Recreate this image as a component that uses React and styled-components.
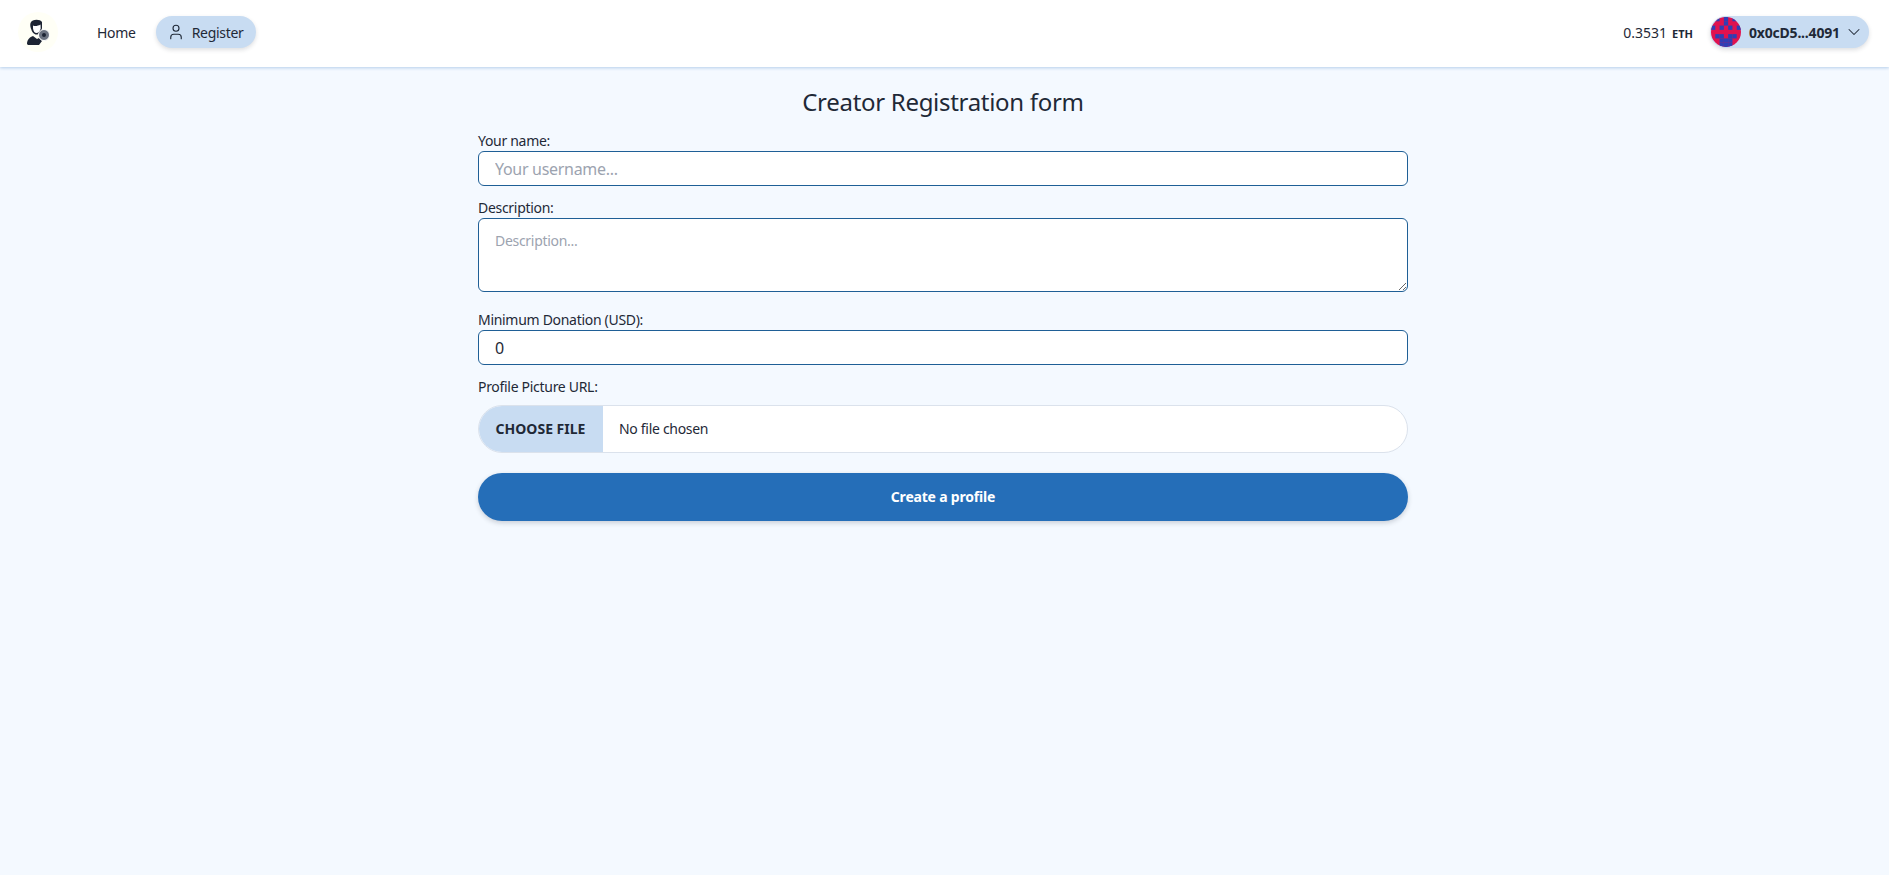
import React from "react";
import styled, { createGlobalStyle } from "styled-components";
import { User, ChevronDown } from "lucide-react";

const Global = createGlobalStyle`
  * { box-sizing: border-box; }
  html, body { margin: 0; padding: 0; }
  body { background: #f4f9ff; font-family: "Noto Sans", sans-serif; color: #1f2937; min-height: 875px; letter-spacing: -0.3px; }
`;
const Bar = styled.header`
  height: 67px; background: #fff; display: flex; align-items: center; justify-content: space-between;
  padding: 0 20px 3px 18px; box-shadow: 0 1px 3px rgba(37,110,184,.3);
`;
const Side = styled.div`display: flex; align-items: center;`;
const LogoBox = styled.div`
  width: 40px; height: 40px; border-radius: 50%; background: #fffff6; display: flex; align-items: center; justify-content: center; margin-right: 39px;
`;
const NavLink = styled.a`
  height: 32px; display: flex; align-items: center; gap: 7px; font-size: 14px; color: #1f2937; border-radius: 16px;
  padding: ${p => (p.$active ? "0 12px 0 11px" : "0 20px 0 0")};
  background: ${p => (p.$active ? "#c8dcf2" : "transparent")};
  box-shadow: ${p => (p.$active ? "0 2px 4px rgba(31,41,55,.15)" : "none")};
`;
const Balance = styled.div`font-size: 14px; letter-spacing: 0; margin-right: 17px; display: flex; align-items: baseline; gap: 5px;`;
const Unit = styled.span`font-size: 11px; font-weight: 700;`;
const Wallet = styled.div`
  width: 159px; height: 32px; border-radius: 16px; background: #c8dcf2; display: flex; align-items: center; padding-left: 1px;
  font-size: 14px; font-weight: 700; box-shadow: 0 2px 4px rgba(31,41,55,.15); gap: 8px;
  letter-spacing: -0.2px;
`;
const Chevron = styled(ChevronDown)`margin-left: -4px;`;
const Page = styled.div`padding-right: 3px;`;
const Main = styled.main`width: 930px; margin: 0 auto; display: flex; flex-direction: column;`;
const Title = styled.h1`font-size: 24px; font-weight: 400; line-height: 32px; text-align: center; margin: 19px 0 13px; color: #1f2937; letter-spacing: -0.3px;`;
const Label = styled.label`display: block; font-size: 14px; line-height: 20px; height: 20px; color: #1f2937;`;
const TextInput = styled.input`
  display: block; width: 100%; height: 35px; border: 1px solid #1f5f96; border-radius: 6px; padding: 0 16px; background: #fff;
  font: 16px "Noto Sans", sans-serif; letter-spacing: -0.3px; color: #1f2937; outline: none; margin-bottom: 12px;
  &::placeholder { color: #9ca3af; }
`;
const TextArea = styled.textarea`
  display: block; width: 100%; height: 74px; border: 1px solid #1f5f96; border-radius: 6px; padding: 12px 16px; background: #fff;
  font: 14px/20px "Noto Sans", sans-serif; letter-spacing: -0.3px; outline: none; margin-bottom: 18px;
  &::placeholder { color: #9ca3af; }
`;
const FileInput = styled.input`
  display: block; width: 100%; height: 48px; border: 1px solid #dbe2ec; border-radius: 24px; background: #fff; overflow: hidden;
  font: 14px "Noto Sans", sans-serif; letter-spacing: -0.3px; color: #1f2937; margin: 8px 0 20px; padding: 0;
  &::file-selector-button {
    height: 48px; width: 125px; margin: -1px 16px 0 -1px; padding-bottom: 2px; border: none; background: #c8dcf2; color: #1f2937;
    font: 700 14px "Noto Sans", sans-serif; text-transform: uppercase;
  }
`;
const Submit = styled.button`
  height: 48px; width: 100%; border: none; border-radius: 24px; background: #256eb8; color: #fff; padding: 0 0 2px;
  font: 700 14px "Noto Sans", sans-serif; letter-spacing: -0.2px; box-shadow: 0 2px 5px rgba(31,41,55,.2);
`;

const cells = [[1,0],[3,0],[5,0],[0,2],[3,1],[6,2],[2,2],[4,2],[1,4],[5,4],[2,4],[4,4],[2,5],[3,5],[4,5],[3,6],[2,6],[4,6]];
const Identicon = () => (
  <svg width="30" height="30" viewBox="0 0 7 7">
    <defs><clipPath id="c"><circle cx="3.5" cy="3.5" r="3.5" /></clipPath></defs>
    <g clipPath="url(#c)">
      <rect width="7" height="7" fill="#e0124f" />
      {cells.map(([x, y]) => <rect key={x + "-" + y} x={x} y={y} width="1" height="1" fill="#2d3fb5" />)}
    </g>
  </svg>
);
const Logo = () => (
  <svg width="24" height="26" viewBox="0 0 24 26" fill="#1d2433">
    <path d="M4.5 4 C6 0 14 0 16 3 L16 9 C15.5 13 13 15.5 10.5 15.5 C8 15.5 6 13 5.5 11 C4.5 9 3.8 6 4.5 4Z" />
    <path d="M7 6.5 C9 7.5 12 7 14.5 5.5 L14.7 9.5 C14 12.5 12 14 10.5 14 C8.8 14 7.5 12.5 7 9.5Z" fill="#fff" />
    <path d="M1 25 C1 20.5 4 18 7 17 L11 20 L13 19 L16 22 L13 26 L2 26Z" />
    <circle cx="18" cy="16" r="5.5" fill="#6b7280" stroke="#fff" strokeWidth="1" />
    <circle cx="18" cy="16" r="2" fill="#1d2433" />
  </svg>
);

export default function App() {
  return (
    <>
      <Global />
      <Bar>
        <Side>
          <LogoBox><Logo /></LogoBox>
          <NavLink>Home</NavLink>
          <NavLink $active><User size={18} strokeWidth={1.5} />Register</NavLink>
        </Side>
        <Side>
          <Balance>0.3531 <Unit>ETH</Unit></Balance>
          <Wallet><Identicon />0x0cD5...4091<Chevron size={20} strokeWidth={1.25} /></Wallet>
        </Side>
      </Bar>
      <Page>
        <Main>
          <Title>Creator Registration form</Title>
          <Label>Your name:</Label>
          <TextInput placeholder="Your username..." />
          <Label>Description:</Label>
          <TextArea placeholder="Description..." />
          <Label>Minimum Donation (USD):</Label>
          <TextInput type="number" defaultValue="0" />
          <Label>Profile Picture URL:</Label>
          <FileInput type="file" />
          <Submit>Create a profile</Submit>
        </Main>
      </Page>
    </>
  );
}
